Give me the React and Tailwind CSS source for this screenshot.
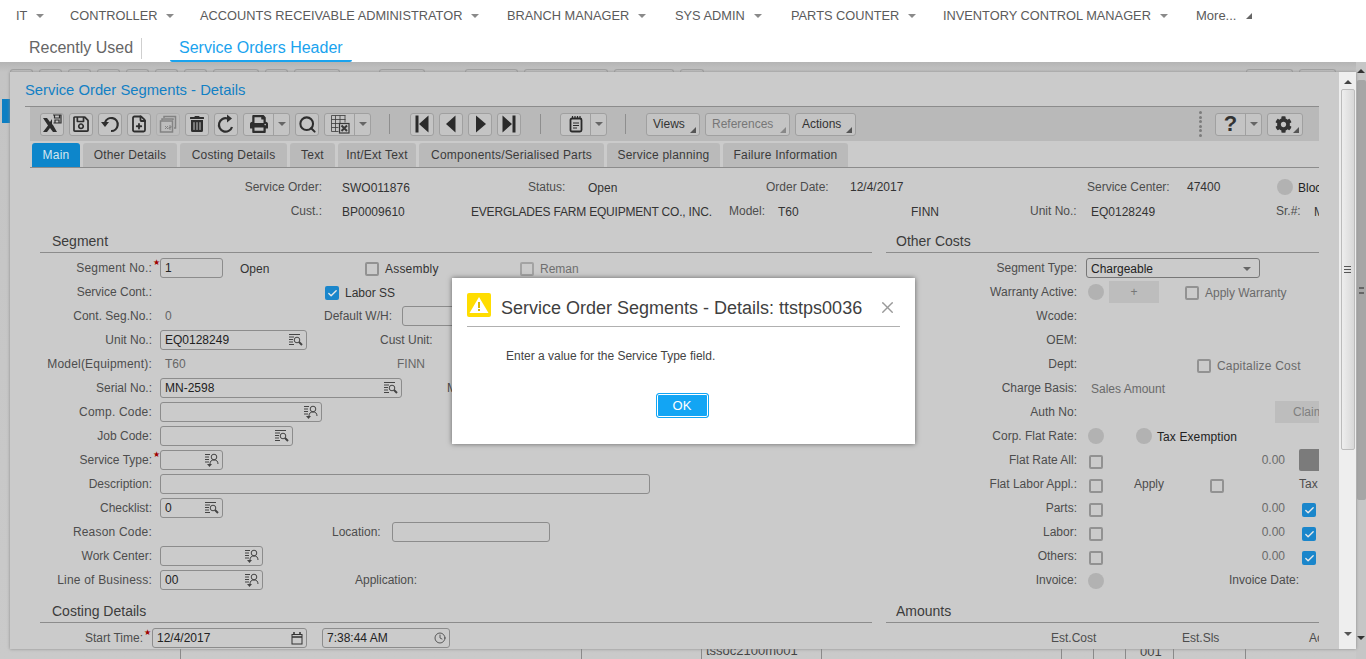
import { FilePlus, Search, Clock, Check, X } from "lucide-react";
import { FaRegSave, FaTrashAlt, FaPrint, FaCog } from "react-icons/fa";

const navItems = [
  ["IT", "w-[54px]"],
  ["CONTROLLER", "w-[130px]"],
  ["ACCOUNTS RECEIVABLE ADMINISTRATOR", "w-[307px]"],
  ["BRANCH MANAGER", "w-[168px]"],
  ["SYS ADMIN", "w-[116px]"],
  ["PARTS COUNTER", "w-[152px]"],
  ["INVENTORY CONTROL MANAGER", "w-[253px]"],
];
const tabs = [
  ["Other Details", "w-[94px]"],
  ["Costing Details", "w-[107px]"],
  ["Text", "w-[45px]"],
  ["Int/Ext Text", "w-[78px]"],
  ["Components/Serialised Parts", "w-[185px]"],
  ["Service planning", "w-[113px]"],
  ["Failure Information", "w-[125px]"],
];

function Caret({ className = "border-t-[#8a8a8a]" }) {
  return <span className={`inline-block w-0 h-0 border-x-[4px] border-x-transparent border-t-[4px] ${className}`} />;
}

function Corner({ className = "border-b-[#555]" }) {
  return <span className={`inline-block w-0 h-0 border-l-[6px] border-l-transparent border-b-[6px] ${className}`} />;
}

function Btn({ children, dim }) {
  return (
    <div className={`w-6 h-[23px] flex items-center justify-center border border-[#a0a0a0] rounded-[3px] bg-[#c4c4c4] text-[#2e2e2e] ${dim ? "opacity-40" : ""}`}>
      {children}
    </div>
  );
}

function SplitBtn({ children }) {
  return (
    <div className="h-[23px] flex border border-[#a0a0a0] rounded-[3px] bg-[#c4c4c4] text-[#2e2e2e]">
      <div className="w-[30px] flex items-center justify-center border-r border-[#a0a0a0]">{children}</div>
      <div className="w-[15px] flex items-center justify-center"><Caret className="border-t-[#666]" /></div>
    </div>
  );
}

function TextBtn({ children, w, dim }) {
  return (
    <div className={`${w} h-[23px] flex items-center pl-[6px] pr-[3px] justify-between border border-[#a0a0a0] rounded-[3px] bg-[#c4c4c4] text-[12px] ${dim ? "text-[#777]" : "text-[#333]"}`}>
      {children}
      <span className="flex self-end mb-[2px]"><Corner className={dim ? "border-b-[#888]" : "border-b-[#555]"} /></span>
    </div>
  );
}

function Sep() {
  return <div className="w-px h-[20px] bg-[#8e8e8e]" />;
}

function ExcelIcon() {
  return (
    <svg width="20" height="20" viewBox="0 0 20 20" fill="#2e2e2e">
      <path d="M1 4h4l3 4 2-3v5l1 1 4 7h-4l-3-4-3 4H1l5-6.500z" />
      <path d="M11 1h8v8h-7.500M12.500 1v3h5V1M13 6h4v3h-4z" fill="none" stroke="#2e2e2e" strokeWidth="1.200" />
    </svg>
  );
}

function CopyIcon() {
  return (
    <svg width="18" height="18" viewBox="0 0 18 18" fill="none" stroke="#333" strokeWidth="1.500">
      <path d="M5 3V1.500h11.500V13H15M3 5.500V4h11v1" />
      <rect x="1.500" y="6" width="12" height="11" />
      <path d="M6 11l3 3M9 11l-3 3M10 11h2v1.500h-2V14h2" strokeWidth="1" />
    </svg>
  );
}

function UndoIcon() {
  return (
    <svg width="20" height="20" viewBox="0 0 20 20" fill="none" stroke="#2e2e2e" strokeWidth="2.200">
      <path d="M5 8.500A6.500 6.500 0 1 1 11 17" />
      <path d="M1 8h8l-4 5z" fill="#2e2e2e" stroke="none" />
    </svg>
  );
}

function RedoIcon() {
  return (
    <svg width="20" height="20" viewBox="0 0 20 20" fill="none" stroke="#2e2e2e" strokeWidth="2.200">
      <path d="M11.500 4.500A6.700 6.700 0 1 0 16 13" />
      <path d="M11 0.500v8l5-4z" fill="#2e2e2e" stroke="none" />
    </svg>
  );
}

function TableXIcon() {
  return (
    <svg width="20" height="20" viewBox="0 0 20 20" fill="none" stroke="#3a3a3a" strokeWidth="0.800">
      <path d="M1.500 1.500h14M1.500 5.500h14M1.500 9.500h8M1.500 13.500h7M1.500 17.500h7M1.500 1.500v16M5.500 1.500v16M10 1.500v8M15 1.500v7" />
      <rect x="9.500" y="9.500" width="9.500" height="9.500" fill="#c4c4c4" strokeWidth="1.200" />
      <path d="M11.500 11.500l5.500 5.500M17 11.500L11.500 17" strokeWidth="2" />
    </svg>
  );
}

function NavIcon({ kind }) {
  return (
    <svg width="18" height="18" viewBox="0 0 18 18" fill="#2a2a2a">
      {kind === "first" && <path d="M2.500.5h3v17h-3zM15.500.5v17L6 9z" />}
      {kind === "prev" && <path d="M13.500.5v17L4 9z" />}
      {kind === "next" && <path d="M5 .5v17L15 9z" />}
      {kind === "last" && <path d="M12.500.5h3v17h-3zM2.500.5v17L12 9z" />}
    </svg>
  );
}

function NoteIcon() {
  return (
    <svg width="18" height="18" viewBox="0 0 18 18" fill="none" stroke="#2a2a2a">
      <rect x="3.500" y="3.500" width="11" height="13" rx="1.500" strokeWidth="1.800" />
      <path d="M5.500 1v3M8 1v3M10.500 1v3M13 1v3" strokeWidth="1.200" />
      <path d="M6 8h6M6 10.500h6M6 13h4" strokeWidth="1.200" />
    </svg>
  );
}

function Lookup() {
  return (
    <svg width="14" height="14" viewBox="0 0 14 14" fill="none" stroke="#444" strokeWidth="1">
      <path d="M0 1.500h11M0 4h5M0 6.500h4M0 9h4M0 11.500h5" />
      <circle cx="8" cy="7" r="2.800" />
      <path d="M10 9l3 3" strokeWidth="2" />
    </svg>
  );
}

function LookupUser() {
  return (
    <svg width="14" height="14" viewBox="0 0 14 14" fill="none" stroke="#444" strokeWidth="1">
      <path d="M0 1.500h5M0 4h4M0 6.500h4M0 9h4" />
      <circle cx="9" cy="4" r="2.800" />
      <path d="M5 11c0-3 1.500-4 4-4s4 1 4 4" />
      <path d="M2 11h5l-2.500 3z" fill="#444" stroke="none" />
    </svg>
  );
}

function CalendarIcon() {
  return (
    <svg width="12" height="13" viewBox="0 0 12 13" fill="none" stroke="#333" strokeWidth="1">
      <rect x="1" y="2.500" width="10" height="9.500" />
      <path d="M1 5h10M3 0v3M9 0v3" strokeWidth="1.500" />
    </svg>
  );
}

function Field({ w, value, icon, dark = true }) {
  return (
    <div className={`${w} h-5 shrink-0 flex items-center justify-between pl-[4px] pr-[3px] border border-[#8c8c8c] rounded-[3px] text-[12px] ${dark ? "text-[#222]" : ""}`}>
      <span>{value}</span>
      {icon}
    </div>
  );
}

function CheckBox({ on }) {
  if (on) {
    return (
      <span className="w-[14px] h-[14px] shrink-0 flex items-center justify-center rounded-[2px] bg-[#1a86cb]">
        <Check size={11} strokeWidth={3} color="#e8e8e8" />
      </span>
    );
  }
  return <span className="w-[14px] h-[14px] shrink-0 border-2 border-[#929292] rounded-[2px]" />;
}

function Dot() {
  return <span className="block w-4 h-4 shrink-0 rounded-full bg-[#b2b2b2]" />;
}

function Row({ label, star, wide, labelW = "w-[112px]", slot = "w-[8px]", children }) {
  return (
    <div className="h-6 flex items-center text-[12px] text-[#4d4d4d]">
      <div className={`${labelW} shrink-0 text-right whitespace-nowrap ${wide ? "tracking-[0.2px]" : ""}`}>{label}</div>
      <div className={`${slot} shrink-0 self-start text-[8px] leading-[10px] pt-[2px] pl-[1px] text-[#a00000]`}>{star ? "★" : ""}</div>
      {children}
    </div>
  );
}

function Section({ title, top, pad = "pl-3" }) {
  return (
    <div className={`${top} ${pad} h-[22px] border-b border-[#8c8c8c] text-[14px] leading-[20px] text-[#3c3c3c] whitespace-nowrap`}>{title}</div>
  );
}

function Ghost({ w }) {
  return <div className={`${w} h-[4px] shrink-0 border border-b-0 border-[#a2a2a2] rounded-t-[3px]`} />;
}

export default function App() {
  return (
    <div className="w-[1366px] h-[659px] overflow-hidden relative flex flex-col bg-white font-['Liberation_Sans',Arial,sans-serif]">
      {/* top nav */}
      <nav className="h-[31px] shrink-0 flex items-center pl-4 text-[12.800px] text-[#5b5b5b] whitespace-nowrap">
        {navItems.map(([item, w]) => (
          <div key={item} className={`${w} flex items-center`}>
            {item}
            <span className="ml-[9px] flex"><Caret /></span>
          </div>
        ))}
        <div className="flex items-center text-[13px]">
          More...
          <span className="ml-[10px] flex"><Corner className="border-b-[#666]" /></span>
        </div>
      </nav>

      {/* recent tabs */}
      <div className="h-[31px] shrink-0 flex items-stretch pl-[29px] whitespace-nowrap">
        <div className="w-[113px] mt-[7px] mb-[3px] pb-[2px] flex items-center border-r border-[#cfcfcf] text-[16px] text-[#666]">Recently Used</div>
        <div className="ml-[28px] w-[182px] pl-[9px] pt-[6px] border-b-2 border-[#1aa3ee] rounded-b-[2px] text-[16px] leading-[22px] text-[#1aa3ee]">Service Orders Header</div>
      </div>

      {/* dimmed page behind the window */}
      <div className="flex-1 relative flex flex-col bg-[linear-gradient(#b4b4b4,#c4c4c4_10px,#cacaca)] text-[#444]">
        <div className="flex mt-[7px] h-[3px] overflow-hidden pl-[10px] gap-[6px]">
          {["w-[23px]", "w-[23px]", "w-[23px]", "w-[23px]", "w-[23px]", "w-[23px]", "w-[23px]", "w-[46px]", "w-[23px]", "w-[46px]"].map((w, i) => (
            <Ghost key={i} w={w} />
          ))}
          <div className="w-[27px] shrink-0" />
          <Ghost w="w-[46px]" />
          <div className="w-[28px] shrink-0" />
          <Ghost w="w-[53px]" />
          <Ghost w="w-[84px]" />
          <Ghost w="w-[60px]" />
          <Ghost w="w-[24px]" />
          <div className="w-[530px] shrink-0" />
          <Ghost w="w-[47px]" />
          <Ghost w="w-[37px]" />
        </div>
        <div className="mt-[27px] ml-[2px] w-2 h-6 bg-[#0d7fc3]" />
        <div className="mt-auto h-[10px] flex text-[13px] leading-[12px] overflow-hidden whitespace-nowrap">
          <div className="w-[181px] border-r border-[#8a8a8a]" />
          <div className="w-[401px] border-r border-[#8a8a8a]" />
          <div className="w-[120px] border-r border-[#8a8a8a]" />
          <div className="w-[120px] border-r border-[#8a8a8a] pl-[4px]"><div className="-mt-[4px]">tssoc2100m001</div></div>
          <div className="w-[240px] border-r border-[#8a8a8a]" />
          <div className="w-[32px] border-r border-[#8a8a8a]" />
          <div className="w-[32px] border-r border-[#8a8a8a]" />
          <div className="w-[48px] border-r border-[#8a8a8a] pl-[14px]"><div className="-mt-[3px]">001</div></div>
          <div className="w-[72px] border-r border-[#8a8a8a]" />
        </div>

        {/* outer scrollbar */}
        <div className="absolute right-0 top-0 bottom-0 w-[10px] flex flex-col items-center bg-[#c6c6c6]">
          <div className="mt-[7px]"><span className="block w-0 h-0 border-x-[4px] border-x-transparent border-b-[4px] border-b-[#333]" /></div>
          <div className="w-[9px] mt-[7px] h-[420px] bg-[#a6a6a6] rounded-[2px] flex items-center justify-center">
            <span className="w-[5px] h-[7px] border-y-2 border-[#666]" />
          </div>
          <div className="mt-auto mb-[12px]"><Caret className="border-t-[#333]" /></div>
        </div>

        {/* details window */}
        <div className="absolute left-[10px] top-[10px] w-[1346px] h-[577px] flex bg-[#cbcbcb] shadow-[0_0_3px_#888] overflow-hidden">
          <div className="w-[1309px] shrink-0 flex flex-col overflow-hidden">
            <div className="h-[34px] shrink-0 pl-[15px] pt-[8px] text-[14.800px] leading-[20px] text-[#1280c4] whitespace-nowrap">Service Order Segments - Details</div>
            <div className="ml-[15px] mr-[-5px] h-px shrink-0 bg-[#8c8c8c]" />

            {/* toolbar */}
            <div className="ml-5 h-[34px] shrink-0 flex items-center pl-[10px] bg-[#b9b9b9]">
              <div className="flex gap-[5px] items-center">
                <Btn><ExcelIcon /></Btn>
                <Btn><FaRegSave size={18} /></Btn>
                <Btn><UndoIcon /></Btn>
                <Btn><FilePlus size={18} strokeWidth={2.400} /></Btn>
                <Btn dim><CopyIcon /></Btn>
                <Btn><FaTrashAlt size={16} /></Btn>
                <Btn><RedoIcon /></Btn>
                <SplitBtn><FaPrint size={18} /></SplitBtn>
                <Btn><Search size={19} strokeWidth={2.600} /></Btn>
                <SplitBtn><TableXIcon /></SplitBtn>
              </div>
              <div className="ml-[18px]"><Sep /></div>
              <div className="ml-[20px] flex gap-[5px] items-center">
                <Btn><NavIcon kind="first" /></Btn>
                <Btn><NavIcon kind="prev" /></Btn>
                <Btn><NavIcon kind="next" /></Btn>
                <Btn><NavIcon kind="last" /></Btn>
              </div>
              <div className="ml-[19px]"><Sep /></div>
              <div className="ml-[19px]"><SplitBtn><NoteIcon /></SplitBtn></div>
              <div className="ml-[18px]"><Sep /></div>
              <div className="ml-[20px] flex gap-[5px]">
                <TextBtn w="w-[54px]">Views</TextBtn>
                <TextBtn w="w-[85px]" dim>References</TextBtn>
                <TextBtn w="w-[61px]">Actions</TextBtn>
              </div>
              <div className="ml-auto flex items-center gap-[5px] pr-[16px]">
                <div className="mr-[8px] h-[28px] w-[3px] flex flex-col justify-between py-[1px]">
                  {[0, 1, 2, 3, 4, 5].map((i) => <span key={i} className="w-[3px] h-[3px] rounded-full bg-[#7c7c7c]" />)}
                </div>
                <SplitBtn><span className="text-[22px] font-bold text-[#333] leading-none">?</span></SplitBtn>
                <div className="w-[36px] h-[23px] flex items-center justify-between pl-[7px] pr-[3px] border border-[#a0a0a0] rounded-[3px] bg-[#c4c4c4] text-[#333]">
                  <FaCog size={17} />
                  <span className="flex self-end mb-[2px]"><Corner /></span>
                </div>
              </div>
            </div>

            {/* tabs */}
            <div className="ml-5 mt-[2px] h-[25px] shrink-0 flex gap-[3px] pl-[2px] border-b border-[#8c8c8c] text-[12px] leading-[25px] tracking-[0.2px] whitespace-nowrap">
              <div className="w-[48px] text-center rounded-t-[3px] bg-[#0d86cb] text-[#d6e6f0]">Main</div>
              {tabs.map(([t, w]) => (
                <div key={t} className={`${w} text-center rounded-t-[3px] bg-[#bababa] text-[#3a3a3a]`}>{t}</div>
              ))}
            </div>

            {/* order info */}
            <div className="pt-[7px] text-[12px] whitespace-nowrap text-[#333]">
              <div className="h-6 flex items-center">
                <div className="w-[312px] shrink-0 text-right text-[#4d4d4d]">Service Order:</div>
                <div className="ml-5 w-[186px] shrink-0 pt-px">SWO011876</div>
                <div className="w-[38px] shrink-0 text-[#4d4d4d]">Status:</div>
                <div className="ml-[22px] w-[178px] shrink-0 pt-px">Open</div>
                <div className="w-[70px] shrink-0 text-[#4d4d4d]">Order Date:</div>
                <div className="ml-[14px] w-[237px] shrink-0">12/4/2017</div>
                <div className="w-[83px] shrink-0 text-[#4d4d4d]">Service Center:</div>
                <div className="ml-[17px] w-[90px] shrink-0">47400</div>
                <Dot />
                <div className="ml-[5px] pt-px text-[#222]">Blocked</div>
              </div>
              <div className="h-6 flex items-center">
                <div className="w-[312px] shrink-0 text-right text-[#4d4d4d]">Cust.:</div>
                <div className="ml-5 w-[129px] shrink-0 pt-px">BP0009610</div>
                <div className="w-[258px] shrink-0 pt-px tracking-[-0.2px]">EVERGLADES FARM EQUIPMENT CO., INC.</div>
                <div className="w-[49px] shrink-0 text-[#4d4d4d]">Model:</div>
                <div className="w-[133px] shrink-0 pt-px">T60</div>
                <div className="w-[119px] shrink-0 pt-px">FINN</div>
                <div className="w-[61px] shrink-0 text-[#4d4d4d]">Unit No.:</div>
                <div className="w-[185px] shrink-0 pt-px">EQ0128249</div>
                <div className="w-[38px] shrink-0 text-[#4d4d4d]">Sr.#:</div>
                <div className="pt-px">MN-2598</div>
              </div>
            </div>

            {/* form columns */}
            <div className="flex pl-[30px] whitespace-nowrap">
              <div className="w-[832px] shrink-0">
                <Section title="Segment" top="mt-[8px]" />
                <div className="pt-[3px]">
                  <Row label="Segment No.:" star wide>
                    <Field w="w-[63px]" value="1" />
                    <div className="ml-[17px] w-[125px] shrink-0 pt-px text-[#333]">Open</div>
                    <div className="w-[155px] shrink-0 flex items-center gap-[6px] tracking-[0.2px] text-[#333] pt-[2px]"><CheckBox />Assembly</div>
                    <div className="flex items-center gap-[6px] text-[#6f6f6f] pt-[2px]"><span className="opacity-70 flex"><CheckBox /></span>Reman</div>
                  </Row>
                  <Row label="Service Cont.:">
                    <div className="ml-[165px] pt-[2px] flex items-center gap-[6px] text-[#333]"><CheckBox on />Labor SS</div>
                  </Row>
                  <Row label="Cont. Seg.No.:">
                    <div className="ml-[5px] w-[159px] shrink-0 text-[#666]">0</div>
                    <div className="w-[78px] shrink-0">Default W/H:</div>
                    <Field w="w-[100px]" />
                  </Row>
                  <Row label="Unit No.:">
                    <Field w="w-[147px]" value="EQ0128249" icon={<Lookup />} />
                    <div className="ml-[73px]">Cust Unit:</div>
                  </Row>
                  <Row label="Model(Equipment):" wide>
                    <div className="ml-[5px] w-[232px] shrink-0 text-[#666]">T60</div>
                    <div className="text-[#666]">FINN</div>
                  </Row>
                  <Row label="Serial No.:">
                    <Field w="w-[242px]" value="MN-2598" icon={<Lookup />} />
                    <div className="ml-[45px]">Model</div>
                  </Row>
                  <Row label="Comp. Code:" wide><Field w="w-[162px]" icon={<LookupUser />} /></Row>
                  <Row label="Job Code:"><Field w="w-[133px]" icon={<Lookup />} /></Row>
                  <Row label="Service Type:" star><Field w="w-[63px]" icon={<LookupUser />} /></Row>
                  <Row label="Description:"><Field w="w-[490px]" /></Row>
                  <Row label="Checklist:"><Field w="w-[63px]" value="0" icon={<Lookup />} /></Row>
                  <Row label="Reason Code:" wide>
                    <div className="ml-[172px] w-[60px] shrink-0">Location:</div>
                    <Field w="w-[158px]" />
                  </Row>
                  <Row label="Work Center:"><Field w="w-[103px]" icon={<LookupUser />} /></Row>
                  <Row label="Line of Business:" wide>
                    <Field w="w-[103px]" value="00" icon={<LookupUser />} />
                    <div className="ml-[92px]">Application:</div>
                  </Row>
                </div>
                <Section title="Costing Details" top="mt-[9px]" />
                <div className="pt-[3px]">
                  <Row label="Start Time:" star labelW="w-[103px]" slot="w-[9px]">
                    <Field w="w-[155px]" value="12/4/2017" icon={<CalendarIcon />} />
                    <div className="ml-[15px]"><Field w="w-[128px]" value="7:38:44 AM" icon={<Clock size={12} strokeWidth={1.500} color="#333" />} /></div>
                  </Row>
                </div>
              </div>

              <div className="ml-[14px] flex-1 min-w-0 overflow-hidden">
                <Section title="Other Costs" top="mt-[8px]" pad="pl-[10px]" />
                <div className="pt-[3px]">
                  <Row label="Segment Type:" labelW="w-[191px]" slot="w-[9px]">
                    <div className="w-[174px] h-5 flex items-center justify-between pl-[4px] pr-[8px] pt-px border border-[#777] rounded-[3px] text-[#222]">
                      Chargeable
                      <Caret className="border-t-[#666]" />
                    </div>
                  </Row>
                  <Row label="Warranty Active:" labelW="w-[191px]" slot="w-[11px]">
                    <Dot />
                    <div className="ml-[5px] w-[50px] h-[22px] flex items-center justify-center bg-[#bdbdbd] text-[#777]">+</div>
                    <div className="ml-[26px] pt-[2px] flex items-center gap-[6px] text-[#6a6a6a]"><CheckBox />Apply Warranty</div>
                  </Row>
                  <Row label="Wcode:" labelW="w-[191px]" />
                  <Row label="OEM:" labelW="w-[191px]" />
                  <Row label="Dept:" labelW="w-[191px]">
                    <div className="ml-[112px] pt-[3px] flex items-center gap-[6px] tracking-[0.2px] text-[#6a6a6a]"><CheckBox />Capitalize Cost</div>
                  </Row>
                  <Row label="Charge Basis:" labelW="w-[191px]" slot="w-[14px]">
                    <div className="pt-px text-[#6a6a6a]">Sales Amount</div>
                  </Row>
                  <Row label="Auth No:" labelW="w-[191px]">
                    <div className="ml-[190px] w-[60px] h-[22px] shrink-0 pl-[18px] leading-[22px] bg-[#bdbdbd] text-[#808080]">Claim</div>
                  </Row>
                  <Row label="Corp. Flat Rate:" labelW="w-[191px]" slot="w-[11px]">
                    <Dot />
                    <div className="ml-[32px]"><Dot /></div>
                    <div className="ml-[5px] pt-px tracking-[0.1px] text-[#222]">Tax Exemption</div>
                  </Row>
                  <Row label="Flat Rate All:" labelW="w-[191px]" slot="w-[12px]">
                    <div className="flex pt-[4px]"><CheckBox /></div>
                    <div className="w-[182px] shrink-0 text-right text-[#6a6a6a]">0.00</div>
                    <div className="ml-[14px] w-[30px] h-[22px] shrink-0 rounded-[2px] bg-[#7b7b7b]" />
                  </Row>
                  <Row label="Flat Labor Appl.:" labelW="w-[191px]" slot="w-[12px]">
                    <div className="flex pt-[4px]"><CheckBox /></div>
                    <div className="ml-[31px] w-[76px] shrink-0">Apply</div>
                    <div className="flex pt-[4px]"><CheckBox /></div>
                    <div className="ml-[75px]">Tax</div>
                  </Row>
                  {["Parts:", "Labor:", "Others:"].map((l) => (
                    <Row key={l} label={l} labelW="w-[191px]" slot="w-[12px]">
                      <div className="flex pt-[4px]"><CheckBox /></div>
                      <div className="w-[182px] shrink-0 text-right text-[#6a6a6a]">0.00</div>
                      <div className="ml-[17px] pt-[4px]"><CheckBox on /></div>
                    </Row>
                  ))}
                  <Row label="Invoice:" labelW="w-[191px]" slot="w-[11px]">
                    <div className="pt-[2px]"><Dot /></div>
                    <div className="ml-[125px]">Invoice Date:</div>
                  </Row>
                </div>
                <Section title="Amounts" top="mt-[9px]" pad="pl-[10px]" />
                <div className="pt-[5px] h-6 flex items-center text-[12px] text-[#4d4d4d]">
                  <div className="ml-[165px] w-[131px] shrink-0">Est.Cost</div>
                  <div className="w-[127px] shrink-0">Est.Sls</div>
                  <div>Act</div>
                </div>
              </div>
            </div>
          </div>

          {/* window scrollbar */}
          <div className="ml-[20px] w-[17px] shrink-0 flex flex-col items-center bg-[#eeeeee]">
            <div className="mt-[8px]"><span className="block w-0 h-0 border-x-[4px] border-x-transparent border-b-[4px] border-b-[#444]" /></div>
            <div className="w-[14px] mt-[5px] h-[361px] flex items-center justify-center border border-[#bcbcbc] rounded-[2px] bg-[linear-gradient(90deg,#eeeeee,#d8d8d8)]">
              <span className="w-[7px] h-[7px] border-y border-[#555] flex items-center"><span className="w-full h-px bg-[#555]" /></span>
            </div>
            <div className="mt-auto mb-[6px]"><Caret className="border-t-[#555]" /></div>
          </div>
        </div>
      </div>

      {/* message dialog */}
      <div className="absolute left-[452px] top-[278px] w-[463px] h-[166px] bg-white shadow-[0_0_5px_rgba(0,0,0,0.5)] px-[15px] pt-[15px]">
        <div className="h-[34px] flex items-start border-b border-[#b0b0b0]">
          <div className="w-6 h-6 shrink-0 flex items-center justify-center rounded-[2px] bg-[#ffdd00]">
            <svg width="20" height="18" viewBox="0 0 20 18">
              <path d="M10 1l9.500 16H.500z" fill="#fff" />
              <path d="M9 6h2v6H9zM9 13h2v2H9z" fill="#d9b800" />
            </svg>
          </div>
          <div className="ml-[10px] text-[18px] leading-[30px] text-[#3f3f3f] whitespace-nowrap">Service Order Segments - Details: ttstps0036</div>
          <div className="ml-auto mr-[3px] mt-[5px] text-[#999]"><X size={19} strokeWidth={1.800} /></div>
        </div>
        <div className="mt-[22px] ml-[39px] text-[12px] leading-[14px] text-[#444]">Enter a value for the Service Type field.</div>
        <div className="mt-[30px] flex justify-center pr-[3px]">
          <div className="w-[53px] h-[25px] flex items-center justify-center rounded-[3px] border border-[#12a5f4] bg-[#12a5f4] text-[13px] text-white shadow-[inset_0_0_0_1px_#fff]">OK</div>
        </div>
      </div>
    </div>
  );
}
